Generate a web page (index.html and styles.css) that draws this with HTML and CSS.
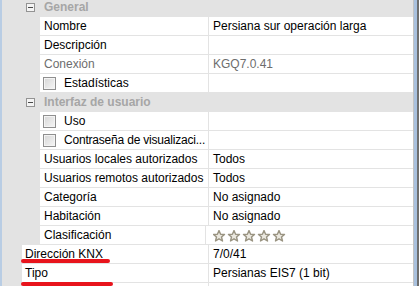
FILE: index.html
```html
<!DOCTYPE html>
<html lang="es">
  <head>
    <meta charset="UTF-8" />
    <title>Propiedades</title>
    <link rel="stylesheet" href="styles.css">
  </head>
  <body>
    <div class="edge-left"></div>
    <div class="pane">
      <div class="row cat">
        <div class="gutter"></div>
        <span class="toggle"></span>
        <span class="cat-title">General</span>
      </div>
      <div class="row sub">
        <div class="gutter"></div>
        <div class="name">Nombre</div>
        <div class="val">Persiana sur operación larga</div>
      </div>
      <div class="row sub">
        <div class="gutter"></div>
        <div class="name">Descripción</div>
        <div class="val"></div>
      </div>
      <div class="row sub muted">
        <div class="gutter"></div>
        <div class="name">Conexión</div>
        <div class="val">KGQ7.0.41</div>
      </div>
      <div class="row sub">
        <div class="gutter"></div>
        <div class="name"><span class="check"></span>Estadísticas</div>
        <div class="val"></div>
      </div>

      <div class="row cat">
        <div class="gutter"></div>
        <span class="toggle"></span>
        <span class="cat-title">Interfaz de usuario</span>
      </div>
      <div class="row sub">
        <div class="gutter"></div>
        <div class="name"><span class="check"></span>Uso</div>
        <div class="val"></div>
      </div>
      <div class="row sub">
        <div class="gutter"></div>
        <div class="name"><span class="check"></span><span class="tight">Contraseña de visualizaci...</span></div>
        <div class="val"></div>
      </div>
      <div class="row sub">
        <div class="gutter"></div>
        <div class="name">Usuarios locales autorizados</div>
        <div class="val">Todos</div>
      </div>
      <div class="row sub">
        <div class="gutter"></div>
        <div class="name">Usuarios remotos autorizados</div>
        <div class="val">Todos</div>
      </div>
      <div class="row sub">
        <div class="gutter"></div>
        <div class="name">Categoría</div>
        <div class="val">No asignado</div>
      </div>
      <div class="row sub">
        <div class="gutter"></div>
        <div class="name">Habitación</div>
        <div class="val">No asignado</div>
      </div>
      <div class="row sub">
        <div class="gutter"></div>
        <div class="name">Clasificación</div>
        <div class="val stars">
          <svg width="76" height="12" viewBox="0 0 76 12">
            <defs>
              <path id="star" d="M6 0.5 L7.6 4.2 L11.5 4.4 L8.5 7 L9.5 11 L6 8.8 L2.5 11 L3.5 7 L0.5 4.4 L4.4 4.2 Z" />
            </defs>
            <g fill="#ebe8df" stroke="#9a9482" stroke-width="1.4" stroke-linejoin="round">
              <use href="#star" x="0" />
              <use href="#star" x="15" />
              <use href="#star" x="30" />
              <use href="#star" x="45" />
              <use href="#star" x="60" />
            </g>
          </svg>
        </div>
      </div>
      <div class="row top marked">
        <div class="gutter"></div>
        <div class="name">Dirección KNX</div>
        <div class="val">7/0/41</div>
      </div>
      <div class="row top marked long">
        <div class="gutter"></div>
        <div class="name">Tipo</div>
        <div class="val">Persianas EIS7 (1 bit)</div>
      </div>
      <div class="row top">
        <div class="gutter"></div>
        <div class="name"></div>
        <div class="val"></div>
      </div>
    </div>
    <div class="edge-right"></div>
  </body>
</html>
```

FILE: styles.css
```css
body {
  margin: 0;
  height: 286px;
  overflow: hidden;
  display: flex;
  background-color: #e3e3e3;
  font-family: "Liberation Sans", Arial, sans-serif;
  font-size: 12px;
  color: #000;
}

.edge-left {
  width: 2px;
  background-color: #b9cde4;
}

.pane {
  width: 411px;
  height: 288px;
  margin-top: -2px;
  overflow: hidden;
}

.edge-right {
  width: 6px;
  border-left: 1px solid #c3c3c3;
  background: linear-gradient(to right, #a9c1de 0, #a9c1de 3px, #6e6e6e 3px);
  box-sizing: border-box;
}

.row {
  display: flex;
  height: 18px;
  border-bottom: 1px solid #e3e3e3;
  position: relative;
}

.gutter {
  width: 20px;
  flex-shrink: 0;
}

.sub .gutter {
  width: 38px;
}

.name {
  flex: 1;
  min-width: 0;
  display: flex;
  align-items: center;
  padding-left: 4px;
  background-color: #fff;
  white-space: nowrap;
  overflow: hidden;
}

.top .name {
  padding-left: 3px;
}

.tight {
  letter-spacing: -0.2px;
}

.val {
  width: 200px;
  flex-shrink: 0;
  display: flex;
  align-items: center;
  padding-left: 4px;
  border-left: 1px solid #e3e3e3;
  background-color: #fff;
  white-space: nowrap;
}

.muted .name,
.muted .val {
  color: #6d6d6d;
}

.cat {
  align-items: center;
}

.toggle {
  width: 7px;
  height: 7px;
  margin-left: 4px;
  margin-top: 1px;
  border: 1px solid #939393;
  background: linear-gradient(#4a4a4a, #4a4a4a) center / 5px 1px no-repeat, #f4f4f4;
}

.cat-title {
  margin-left: 9px;
  font-weight: bold;
  color: #a6a6a6;
}

.check {
  flex-shrink: 0;
  width: 11px;
  height: 11px;
  margin: 0 8px 0 -1px;
  border: 1px solid #8f8f8f;
  background: linear-gradient(135deg, #d6d6d6, #f6f6f6);
  box-shadow: inset 0 0 0 1px #f4f4f4;
}

.stars {
  padding-left: 7px;
}

.stars svg {
  display: block;
  margin-top: 1px;
}

.marked::after {
  content: "";
  position: absolute;
  z-index: 1;
  left: 19px;
  width: 89px;
  height: 4px;
  bottom: 0;
  border-radius: 2px;
  background-color: #e8141c;
}

.marked.long::after {
  width: 92px;
  bottom: -4px;
}
```
